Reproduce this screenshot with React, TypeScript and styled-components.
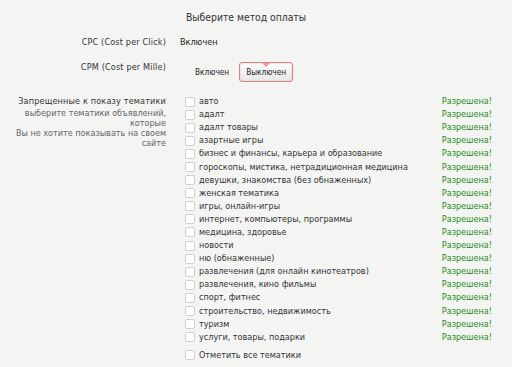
import React from 'react';
import styled, { createGlobalStyle } from 'styled-components';

const topics = [
  'авто',
  'адалт',
  'адалт товары',
  'азартные игры',
  'бизнес и финансы, карьера и образование',
  'гороскопы, мистика, нетрадиционная медицина',
  'девушки, знакомства (без обнаженных)',
  'женская тематика',
  'игры, онлайн-игры',
  'интернет, компьютеры, программы',
  'медицина, здоровье',
  'новости',
  'ню (обнаженные)',
  'развлечения (для онлайн кинотеатров)',
  'развлечения, кино фильмы',
  'спорт, фитнес',
  'строительство, недвижимость',
  'туризм',
  'услуги, товары, подарки',
];

const GlobalStyle = createGlobalStyle`
  html, body {
    margin: 0;
    padding: 0;
    background: #f4f5f3;
  }
  body {
    font-family: "DejaVu Sans Condensed", "DejaVu Sans", sans-serif;
    color: #333;
  }
`;

export default function App() {
  return (
    <Root>
      <GlobalStyle />
      <Title>Выберите метод оплаты</Title>
      <Row $mt={12}>
        <Label>CPC (Cost per Click)</Label>
        <Value>Включен</Value>
      </Row>
      <Row $mt={12}>
        <Label>CPM (Cost per Mille)</Label>
        <Toggle>
          <ToggleButton>Включен</ToggleButton>
          <ToggleButton $active>Выключен</ToggleButton>
        </Toggle>
      </Row>
      <Row $mt={13}>
        <Label>
          Запрещенные к показу тематики
          <Hint>
            выберите тематики объявлений,
            <br />
            которые
            <br />
            Вы не хотите показывать на своем
            <br />
            сайте
          </Hint>
        </Label>
        <TopicList>
          {topics.map((t) => (
            <TopicRow key={t}>
              <Check type="checkbox" />
              <TopicName>{t}</TopicName>
              <Status>Разрешена!</Status>
            </TopicRow>
          ))}
          <TopicRow $all>
            <Check type="checkbox" />
            <TopicName>Отметить все тематики</TopicName>
          </TopicRow>
        </TopicList>
      </Row>
    </Root>
  );
}

const Root = styled.div`
  width: 512px;
  height: 367px;
  box-sizing: border-box;
  padding: 10px 20px 0 0;
  font-size: 9px;
  line-height: 13px;
  overflow: hidden;
`;

const Title = styled.div`
  text-align: center;
  font-size: 10.3px;
  line-height: 14px;
  color: #333;
`;

const Row = styled.div<{ $mt?: number }>`
  display: grid;
  grid-template-columns: 166px 1fr;
  column-gap: 14px;
  margin-top: ${(p) => p.$mt ?? 0}px;
  align-items: start;
`;

const Label = styled.div`
  text-align: right;
  color: #333;
  font-size: 9px;
  letter-spacing: 0.17px;
  white-space: nowrap;
`;

const Hint = styled.div`
  color: #666;
  letter-spacing: 0;
  line-height: 10px;
  margin-top: 0;
`;

const Value = styled.div`
  color: #222;
`;

const Toggle = styled.div`
  display: flex;
  align-items: center;
  gap: 3px;
  margin-top: 1px;
  padding-left: 8px;
`;

const ToggleButton = styled.button<{ $active?: boolean }>`
  position: relative;
  font-family: inherit;
  font-size: 8.2px;
  color: #222;
  height: 20px;
  padding: 0 6px;
  border-radius: 3px;
  background: ${(p) => (p.$active ? 'linear-gradient(#fdfdfd, #e8e8e8)' : 'transparent')};
  border: 1px solid ${(p) => (p.$active ? '#d98080' : 'transparent')};
  box-shadow: ${(p) => (p.$active ? 'inset 0 0 2px rgba(200,60,60,0.25)' : 'none')};
  &::after {
    content: '';
    display: ${(p) => (p.$active ? 'block' : 'none')};
    position: absolute;
    top: 0;
    left: 50%;
    margin-left: -4px;
    border-left: 4px solid transparent;
    border-right: 4px solid transparent;
    border-top: 4px solid #f29a9a;
  }
`;

const TopicList = styled.div`
  display: flex;
  flex-direction: column;
`;

const TopicRow = styled.div<{ $all?: boolean }>`
  display: flex;
  align-items: center;
  height: 13.1px;
  margin-top: ${(p) => (p.$all ? '5px' : '0')};
`;

const Check = styled.input`
  appearance: none;
  width: 10px;
  height: 10px;
  margin: 0 4px 0 5px;
  background: #fff;
  border: 1px solid #cfcfcf;
  border-radius: 2px;
  box-sizing: border-box;
`;

const TopicName = styled.span`
  flex: 1;
  color: #333;
`;

const Status = styled.span`
  color: #1b8a1b;
`;
